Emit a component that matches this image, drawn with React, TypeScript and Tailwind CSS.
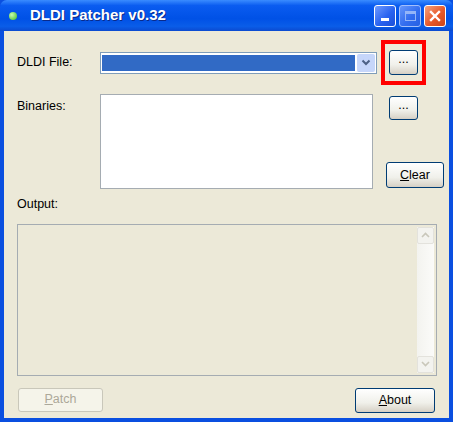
import * as React from "react";

function XpButton({
  children,
  className = "",
  disabled = false,
}: {
  children: React.ReactNode;
  className?: string;
  disabled?: boolean;
}) {
  return (
    <button
      className={
        "flex items-center justify-center rounded-[3px] border text-[12.5px] " +
        (disabled
          ? "border-[#c9c7ba] bg-[#f5f4ea] text-[#aca899] "
          : "border-[#003c74] bg-[linear-gradient(#ffffff,#f0f0ea_60%,#d6d0c5)] text-black shadow-[inset_0_-1px_0_#d6d0c5] ") +
        className
      }
    >
      {children}
    </button>
  );
}

function TitleButtons() {
  return (
    <div className="flex gap-[3px] pt-[1px]">
      <div className="flex h-[22px] w-[22px] items-end justify-center rounded-[3px] border border-white bg-[linear-gradient(135deg,#6f9bff,#2a63f0_55%,#1a4fd8)] pb-[5px]">
        <div className="h-[3px] w-[8px] bg-white" />
      </div>
      <div className="flex h-[22px] w-[22px] items-center justify-center rounded-[3px] border border-[#c9d8ff] bg-[linear-gradient(135deg,#7ea6ff,#3f74f2_55%,#2e62e2)] opacity-80">
        <div className="h-[10px] w-[11px] border border-t-[3px] border-[#b8cdfc]" />
      </div>
      <div className="flex h-[22px] w-[22px] items-center justify-center rounded-[3px] border border-white bg-[linear-gradient(135deg,#f4a27e,#e8592a_55%,#cc4418)]">
        <svg width="12" height="12" viewBox="0 0 12 12">
          <path d="M2 2 L10 10 M10 2 L2 10" stroke="white" strokeWidth="2.4" strokeLinecap="square" />
        </svg>
      </div>
    </div>
  );
}

function ScrollArrow({ up }: { up?: boolean }) {
  return (
    <div className="flex h-[17px] w-[17px] items-center justify-center rounded-[2px] border border-[#e3e2dc] bg-[#f3f3ef]">
      <svg width="9" height="6" viewBox="0 0 9 6">
        <path
          d={up ? "M1 5 L4.5 1.5 L8 5" : "M1 1 L4.5 4.5 L8 1"}
          stroke="#c9c7ba"
          strokeWidth="1.6"
          fill="none"
        />
      </svg>
    </div>
  );
}

export default function App() {
  return (
    <div
      className="flex h-[422px] w-[453px] flex-col bg-[#0a4fe0] text-[12.5px] text-black"
      style={{ fontFamily: '"Liberation Sans", Arial, sans-serif' }}
    >
      {/* title bar */}
      <div className="flex h-[31px] items-center rounded-t-[7px] bg-[linear-gradient(#3a8cff,#0a5cf0_18%,#0051e6_60%,#0a5de8_85%,#0b4ad0)] pl-[9px] pr-[7px]">
        <div className="h-[8px] w-[8px] rounded-full bg-[radial-gradient(circle_at_35%_35%,#c8ffb0,#3dbb21)]" />
        <span className="ml-[13px] text-[15px] font-bold text-white [text-shadow:1px_1px_0_#0a2a8a]">
          DLDI Patcher v0.32
        </span>
        <div className="ml-auto">
          <TitleButtons />
        </div>
      </div>

      {/* body */}
      <div className="mx-[4px] mb-[4px] flex flex-1 flex-col bg-[#ece9d8] pl-[13px]">
        {/* DLDI file row */}
        <div className="mt-[9px] flex h-[45px] items-center">
          <span className="w-[83px]">DLDI File:</span>
          <div className="flex h-[22px] w-[277px] items-stretch border border-[#7f9db9] bg-white p-[1px]">
            <div className="my-[1px] flex-1 bg-[#316ac5]" />
            <div className="ml-[2px] flex w-[18px] items-center justify-center rounded-[2px] bg-[#c6d6fa]">
              <svg width="10" height="7" viewBox="0 0 10 7">
                <path d="M1.5 1.5 L5 5 L8.5 1.5" stroke="#4d6185" strokeWidth="2" fill="none" />
              </svg>
            </div>
          </div>
          <div className="ml-[4px] flex h-[45px] w-[45px] items-center justify-center border-[4px] border-[#ff0000]">
            <XpButton className="h-[25px] w-[29px] pb-[6px]">...</XpButton>
          </div>
        </div>

        {/* binaries row */}
        <div className="mt-[9px] flex">
          <span className="w-[83px] pt-[3px]">Binaries:</span>
          <div className="h-[95px] w-[273px] border border-[#a5acb2] bg-white" />
          <div className="relative ml-[13px] flex h-[95px] w-[58px] flex-col">
            <XpButton className="ml-[3px] mt-[2px] h-[24px] w-[29px] pb-[6px]">...</XpButton>
            <XpButton className="mt-auto mb-[1px] h-[26px] w-[58px]">
              <span>
                <span className="underline">C</span>lear
              </span>
            </XpButton>
          </div>
        </div>

        {/* output */}
        <span className="mt-[6px]">Output:</span>
        <div className="mt-[10px] flex h-[152px] w-[420px] border border-[#a5acb2] bg-[#ece9d8] p-[2px]">
          <div className="flex-1" />
          <div className="flex w-[17px] flex-col bg-[linear-gradient(90deg,#f3f3ef,#fbfbf9)]">
            <ScrollArrow up />
            <div className="flex-1" />
            <ScrollArrow />
          </div>
        </div>

        {/* bottom buttons */}
        <div className="mt-[12px] flex w-[418px] justify-between pl-[1px]">
          <XpButton disabled className="h-[24px] w-[85px]">
            <span>
              <span className="underline">P</span>atch
            </span>
          </XpButton>
          <XpButton className="h-[25px] w-[80px]">
            <span>
              <span className="underline">A</span>bout
            </span>
          </XpButton>
        </div>
      </div>
    </div>
  );
}
